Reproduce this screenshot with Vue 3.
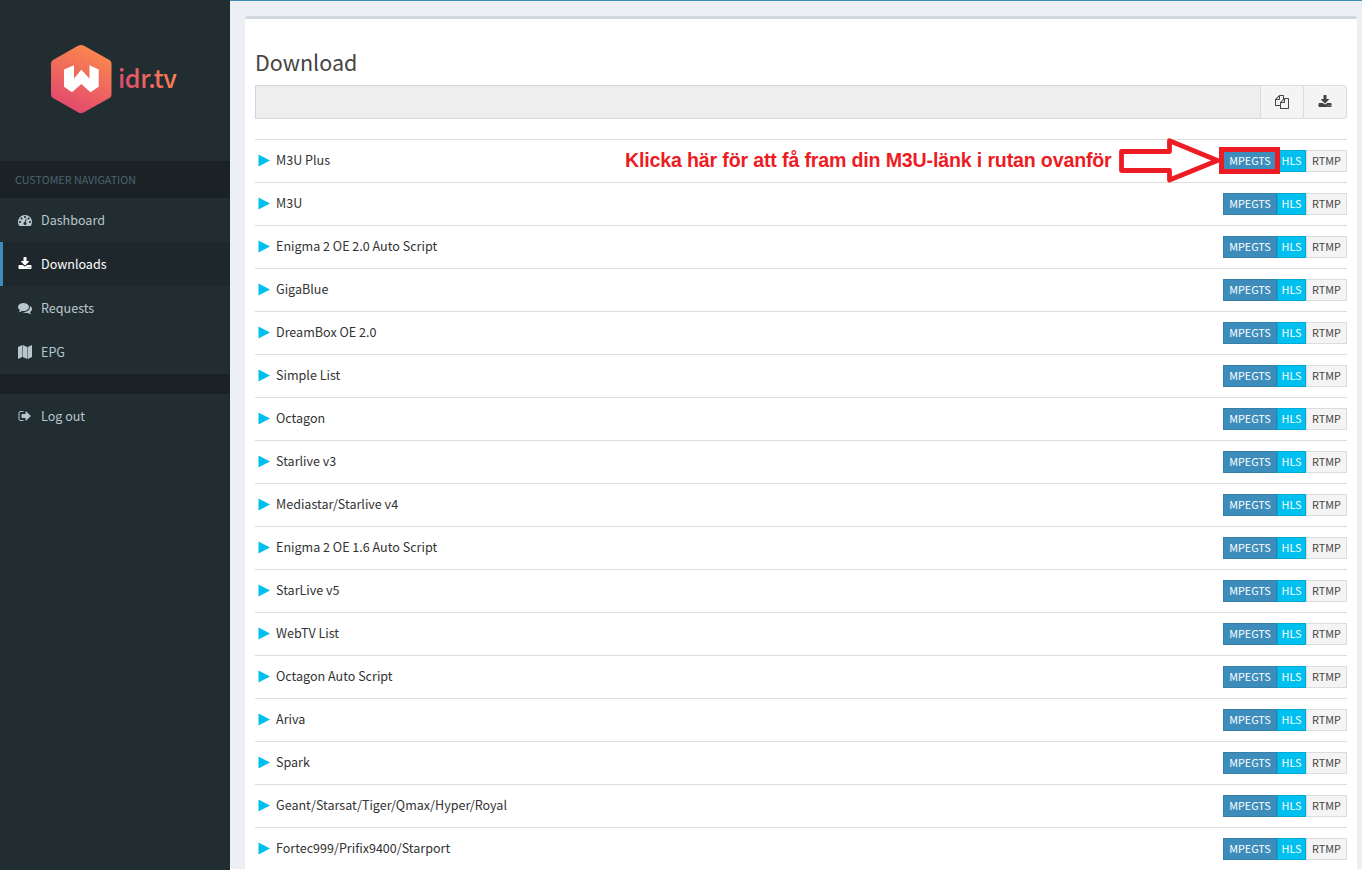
<script setup>
const icons = {
  dashboard: 'M384 1152q0-53-37.5-90.5t-90.5-37.5-90.5 37.5-37.5 90.5 37.5 90.5 90.5 37.5 90.5-37.5 37.5-90.5zm192-448q0-53-37.5-90.5t-90.5-37.5-90.5 37.5-37.5 90.5 37.5 90.5 90.5 37.5 90.5-37.5 37.5-90.5zm428 481l101-382q6-26-7.5-48.5t-38.5-29.5-48 6.5-30 39.5l-101 382q-60 5-107 43.5t-63 98.5q-20 77 20 146t117 89 146-20 89-117q16-60-6-117t-72-91zm660-33q0-53-37.5-90.5t-90.5-37.5-90.5 37.5-37.5 90.5 37.5 90.5 90.5 37.5 90.5-37.5 37.5-90.5zm-640-640q0-53-37.5-90.5t-90.5-37.5-90.5 37.5-37.5 90.5 37.5 90.5 90.5 37.5 90.5-37.5 37.5-90.5zm448 192q0-53-37.5-90.5t-90.5-37.5-90.5 37.5-37.5 90.5 37.5 90.5 90.5 37.5 90.5-37.5 37.5-90.5zm320 448q0 261-141 483-19 29-54 29h-1402q-35 0-54-29-141-221-141-483 0-182 71-348t191-286 286-191 348-71 348 71 286 191 191 286 71 348z',
  download: 'M1344 1344q0-26-19-45t-45-19-45 19-19 45 19 45 45 19 45-19 19-45zm256 0q0-26-19-45t-45-19-45 19-19 45 19 45 45 19 45-19 19-45zm128-224v320q0 40-28 68t-68 28h-1472q-40 0-68-28t-28-68v-320q0-40 28-68t68-28h465l135 136q58 56 136 56t136-56l136-136h464q40 0 68 28t28 68zm-325-569q17 41-14 70l-448 448q-18 19-45 19t-45-19l-448-448q-31-29-14-70 17-39 59-39h256v-448q0-26 19-45t45-19h256q26 0 45 19t19 45v448h256q42 0 59 39z',
  comments: 'M1408 768q0 139-94 257t-256.5 186.5-353.5 68.5q-86 0-176-16-124 88-278 128-36 9-86 16h-3q-11 0-20.5-8t-11.5-21q-1-3-1-6.5t.5-6.5 2-6l2.5-5 3.5-5.5 4-5 4.5-5 4-4.5q5-6 23-25t26-29.5 22.5-29 25-38.5 20.5-44q-124-72-195-177t-71-224q0-139 94-257t256.5-186.5 353.5-68.5 353.5 68.5 256.5 186.5 94 257zm384 256q0 120-71 224.5t-195 176.5q10 24 20.5 44t25 38.5 22.5 29 26 29.5 23 25q1 1 4 4.5t4.5 5 4 5 3.5 5.5l2.5 5 2 6 .5 6.5-1 6.5q-3 14-13 22t-22 7q-50-7-86-16-154-40-278-128-90 16-176 16-271 0-472-132 58 4 88 4 161 0 309-45t264-129q125-92 192-212t67-254q0-77-23-152 129 71 204 178t75 230z',
  map: 'M0 256L540 0V1536L0 1792ZM600 0L1190 256V1792L600 1536ZM1250 256L1792 0V1536L1250 1792Z',
  signout: 'M704 1440q0 4 1 20t.5 26.5-3 23.5-10 19.5-20.5 6.5h-320q-119 0-203.5-84.5t-84.5-203.5v-704q0-119 84.5-203.5t203.5-84.5h320q13 0 22.5 9.5t9.5 22.5q0 4 1 20t.5 26.5-3 23.5-10 19.5-20.5 6.5h-320q-66 0-113 47t-47 113v704q0 66 47 113t113 47h312l11.5 1 11.5 3 8 5.5 7 9 2 13.5zm928-544q0 26-19 45l-544 544q-19 19-45 19t-45-19-19-45v-288h-448q-26 0-45-19t-19-45v-384q0-26 19-45t45-19h448v-288q0-26 19-45t45-19 45 19l544 544q19 19 19 45z',
  files: 'M1696 384q40 0 68 28t28 68v1216q0 40-28 68t-68 28h-960q-40 0-68-28t-28-68v-288h-544q-40 0-68-28t-28-68v-672q0-40 20-88t48-76l408-408q28-28 76-48t88-20h416q40 0 68 28t28 68v328q68-40 128-40h416zm-544 213l-299 299h299v-299zm-640-384l-299 299h299v-299zm196 647l316-316v-416h-384v416q0 40-28 68t-68 28h-416v640h512v-256q0-40 20-88t48-76zm956 804v-1152h-384v416q0 40-28 68t-68 28h-416v640h896z'
}

const nav = [
  { label: 'Dashboard', icon: 'dashboard' },
  { label: 'Downloads', icon: 'download', active: true },
  { label: 'Requests', icon: 'comments' },
  { label: 'EPG', icon: 'map' }
]

const rows = [
  'M3U Plus', 'M3U', 'Enigma 2 OE 2.0 Auto Script', 'GigaBlue', 'DreamBox OE 2.0',
  'Simple List', 'Octagon', 'Starlive v3', 'Mediastar/Starlive v4',
  'Enigma 2 OE 1.6 Auto Script', 'StarLive v5', 'WebTV List', 'Octagon Auto Script',
  'Ariva', 'Spark', 'Geant/Starsat/Tiger/Qmax/Hyper/Royal', 'Fortec999/Prifix9400/Starport'
]
</script>

<template>
  <div class="page">
    <aside class="sidebar">
      <div class="brand">
        <svg width="130" height="72" viewBox="0 0 130 72">
          <defs>
            <linearGradient id="hex" x1="0.7" y1="0" x2="0.3" y2="1">
              <stop offset="0" stop-color="#fb8a4c" />
              <stop offset="1" stop-color="#e2466f" />
            </linearGradient>
            <linearGradient id="word" x1="0" y1="0.7" x2="1" y2="0.3">
              <stop offset="0" stop-color="#e2466f" />
              <stop offset="1" stop-color="#fb8a4c" />
            </linearGradient>
          </defs>
          <path d="M28 2.8Q31 1 34 2.8L59.500 17Q61.500 18.300 61.500 20.500V51.500Q61.500 53.800 59.500 55L34 69.300Q31 71 28 69.300L3 55Q1 53.800 1 51.500V20.500Q1 18.300 3 17Z" fill="url(#hex)" />
          <path d="M14 26.500L24 22.300V35.500L31.300 26.800L39.500 35.500V22.300L48.700 26.500V43.800L40.500 49.300L31.300 41L22 49.300L14 43.800Z" fill="#fff" />
          <text x="68" y="45" textLength="59" class="word" fill="url(#word)">idr.tv</text>
        </svg>
      </div>
      <div class="nav-head">CUSTOMER NAVIGATION</div>
      <div v-for="n in nav" :key="n.label" class="nav-item" :class="{ active: n.active }">
        <svg class="ico" viewBox="0 0 1792 1792"><path :d="icons[n.icon]" /></svg>
        <span>{{ n.label }}</span>
      </div>
      <div class="nav-gap"></div>
      <div class="nav-item">
        <svg class="ico" viewBox="0 0 1792 1792"><path :d="icons.signout" /></svg>
        <span>Log out</span>
      </div>
    </aside>
    <main class="main">
      <section class="box">
        <h3>Download</h3>
        <div class="field">
          <div class="input"></div>
          <div class="btn"><svg class="ico" viewBox="0 0 1792 1792"><path :d="icons.files" /></svg></div>
          <div class="btn last"><svg class="ico" viewBox="0 0 1792 1792"><path :d="icons.download" /></svg></div>
        </div>
        <div class="list">
          <div v-for="r in rows" :key="r" class="row">
            <svg class="play" width="12" height="13" viewBox="0 0 12 13"><path d="M0.500 0.500L12 6.500L0.500 12.500Z" /></svg>
            <span class="name">{{ r }}</span>
            <div class="group">
              <span class="tag mpeg">MPEGTS</span>
              <span class="tag hls">HLS</span>
              <span class="tag rtmp">RTMP</span>
            </div>
          </div>
        </div>
      </section>
    </main>
    <div class="note">Klicka här för att få fram din M3U-länk i rutan ovanför</div>
    <svg class="arrow" width="110" height="50" viewBox="0 0 110 50">
      <path d="M5.500 16.500H53.500V5.700L101.500 25.500L53.500 45V35.500H5.500Z" />
    </svg>
    <div class="mark"></div>
  </div>
</template>

<style>
body { overflow: hidden; }
</style>

<style scoped>
.page {
  position: relative;
  display: flex;
  height: 870px;
  overflow: hidden;
  font-family: "Noto Sans CJK SC", sans-serif;
  font-size: 12.55px;
  color: #333;
  white-space: nowrap;
}
.sidebar { width: 230px; flex: none; background: #222d32; }
.brand { height: 161px; box-sizing: border-box; padding: 43px 0 0 50px; }
.brand svg { display: block; }
.word { font-size: 25px; font-weight: 500; }
.nav-head {
  height: 37px;
  line-height: 37px;
  padding-left: 15px;
  background: #1a2226;
  color: #4b646f;
  font-size: 10.75px;
}
.nav-item {
  height: 44px;
  box-sizing: border-box;
  display: flex;
  align-items: center;
  gap: 9px;
  padding-left: 15px;
  border-left: 3px solid transparent;
  color: #b8c7ce;
}
.nav-item span { margin-bottom: 2px; }
.nav-item.active { background: #1e282c; border-left-color: #3c8dbc; color: #fff; }
.nav-gap { height: 20px; background: #1a2226; }
.ico { width: 14px; height: 14px; fill: currentColor; display: block; }
.main {
  flex: 1;
  height: 869px;
  box-sizing: border-box;
  overflow: hidden;
  background: #ecf0f5;
  border-top: 1px solid #3c8dbc;
  padding: 15px 5px 0 15px;
}
.box {
  height: 860px;
  box-sizing: border-box;
  border-top: 3px solid #d2d6de;
  border-radius: 3px 3px 0 0;
  background: #fff;
  padding: 27px 10px 0;
}
h3 { margin: 0; height: 39px; line-height: 32px; font-size: 21.5px; font-weight: 400; color: #444; }
.field { display: flex; height: 34px; }
.input { flex: 1; background: #eee; border: 1px solid #d2d6de; border-right: 0; }
.btn {
  width: 43px;
  box-sizing: border-box;
  border: 1px solid #ddd;
  border-right: 0;
  background: #f4f4f4;
  color: #444;
  display: flex;
  align-items: center;
  justify-content: center;
}
.btn.last { width: 44px; border-right: 1px solid #ddd; border-radius: 0 3px 3px 0; }
.list { margin-top: 20px; }
.row {
  height: 43px;
  box-sizing: border-box;
  border-top: 1px solid #ddd;
  display: flex;
  align-items: center;
}
.play { margin: 0 6px 2px 3px; fill: #00c0ef; }
.name { flex: 1; margin-bottom: 3px; }
.group { display: flex; }
.tag {
  height: 22px;
  line-height: 19px;
  box-sizing: border-box;
  border: 1px solid;
  text-align: center;
  font-size: 10.8px;
}
.mpeg { width: 54px; background: #3c8dbc; border-color: #367fa9; color: #fff; }
.hls { width: 29px; background: #00c0ef; border-color: #00acd6; color: #fff; }
.rtmp { width: 41px; background: #f4f4f4; border-color: #ddd; color: #444; }
.note {
  position: absolute;
  left: 625px;
  top: 148px;
  font: bold 19.6px/24px "Liberation Sans", Arial, sans-serif;
  letter-spacing: -0.16px;
  color: #ed1c24;
}
.arrow { position: absolute; left: 1116px; top: 135px; fill: none; stroke: #ed1c24; stroke-width: 4.8; stroke-linejoin: round; }
.mark {
  position: absolute;
  left: 1219px;
  top: 147px;
  width: 61px;
  height: 27px;
  box-sizing: border-box;
  border: 5px solid #ed1c24;
}
</style>
